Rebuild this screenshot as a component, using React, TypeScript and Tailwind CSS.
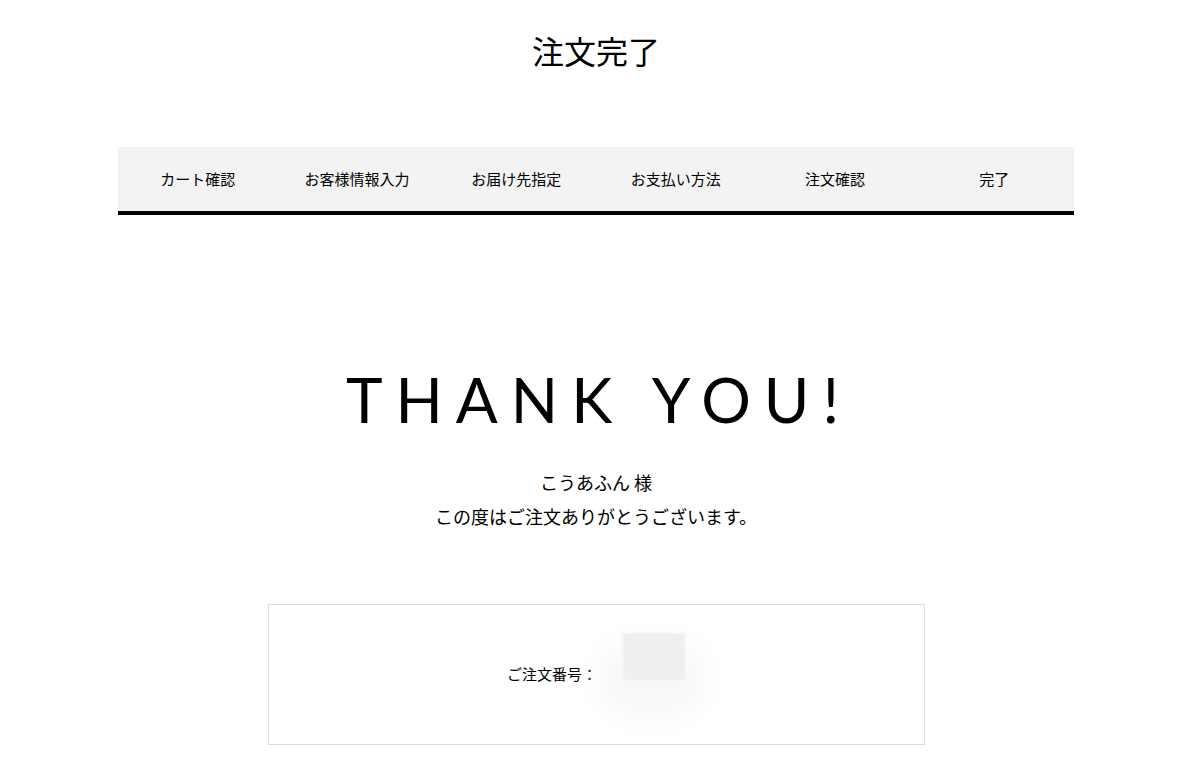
import React from "react";

const STEPS = ["カート確認", "お客様情報入力", "お届け先指定", "お支払い方法", "注文確認", "完了"];

const JP = "font-['Hiragino_Sans','Noto_Sans_CJK_JP',sans-serif]";

export default function App() {
  return (
    <div className={`w-[1192px] bg-white text-black ${JP} pb-9`}>
      {/* Page title */}
      <h1 className="pt-[28px] text-center text-[32px] leading-[44px] font-normal">注文完了</h1>

      {/* Step bar */}
      <nav className="mx-auto mt-[75px] w-[956px] bg-[#f3f3f3] border-b-4 border-black">
        <ul className="grid grid-cols-6 h-[64px] items-center">
          {STEPS.map((s) => (
            <li key={s} className="text-center text-[15px]">
              {s}
            </li>
          ))}
        </ul>
      </nav>

      {/* Thanks */}
      <div className="mt-[148px] text-center">
        <p className="pl-[6px] text-[62px] leading-[72px] tracking-[0.21em] font-['Lato',sans-serif] font-normal">
          THANK YOU!
        </p>
        <div className="mt-[30px] text-[18px] leading-[34px]">
          <p>こうあふん 様</p>
          <p>この度はご注文ありがとうございます。</p>
        </div>
      </div>

      {/* Order number */}
      <div className="mx-auto mt-[71px] flex h-[141px] w-[657px] items-center justify-center border border-[#dcdcdc]">
        <div className="flex items-center text-[15px]">
          <span>ご注文番号：</span>
          <span className="relative inline-block h-[20px] w-[88px]">
            <span className="absolute left-[0px] top-[-26px] h-[80px] w-[110px] rounded-full bg-[#f6f6f6] blur-md opacity-70" />
            <span className="absolute left-[26px] top-[-32px] h-[47px] w-[62px] bg-[#efefef] blur-[1px]" />
          </span>
        </div>
      </div>
    </div>
  );
}
